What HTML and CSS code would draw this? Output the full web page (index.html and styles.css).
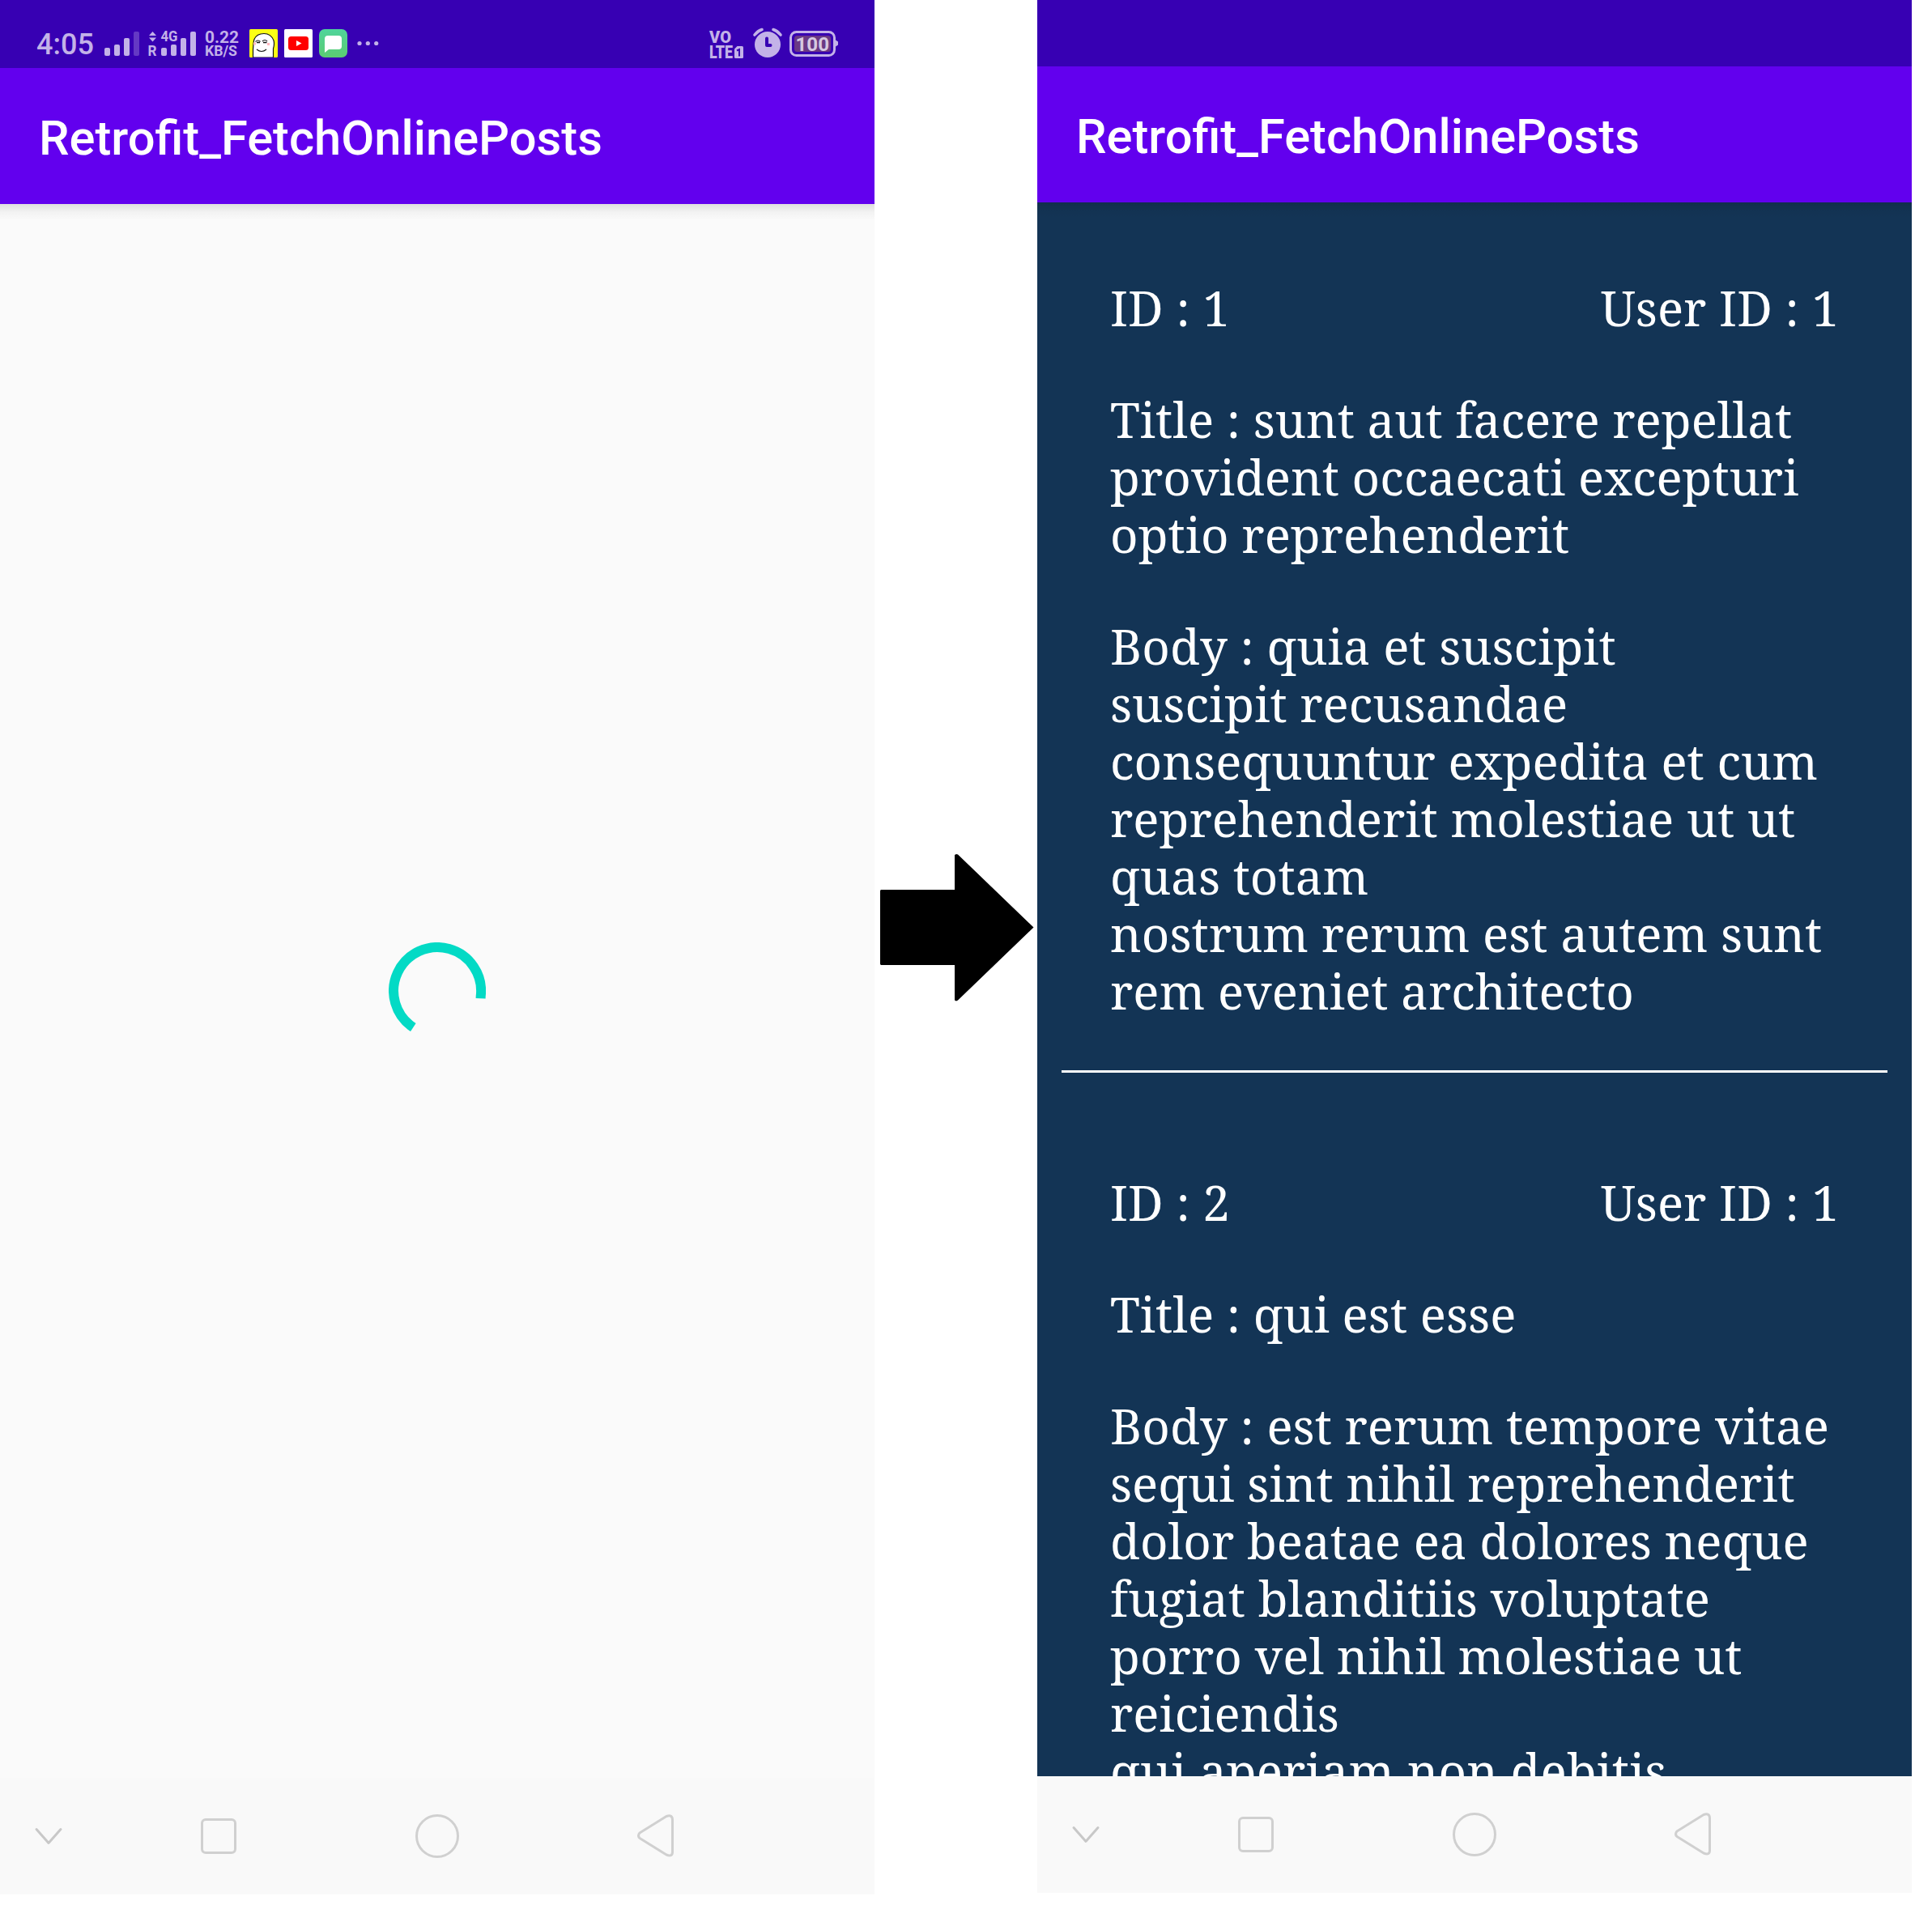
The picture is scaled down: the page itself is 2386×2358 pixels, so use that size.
FILE: index.html
```html
<!DOCTYPE html>
<html lang="en">
<head>
<meta charset="utf-8">
<title>Retrofit_FetchOnlinePosts</title>
<link rel="stylesheet" href="styles.css">
</head>
<body>
<main class="board">
  <section class="phone">
    <header class="status">
      <span class="clock">4:05</span>
      <svg class="sig" width="44" height="84" viewBox="129 0 44 84">
        <rect x="129" y="59" width="7" height="10" rx="2"/><rect x="141" y="55" width="7" height="14" rx="2"/><rect x="153" y="47" width="7" height="22" rx="2"/><rect x="165" y="39" width="7" height="30" rx="2" opacity=".32"/>
      </svg>
      <svg class="sig2" width="60" height="84" viewBox="183 0 60 84">
        <path d="M184 44l4.500-5 4.500 5zM184 46.500l4.500 5 4.500-5z"/>
        <text class="tiny" x="182.500" y="69" textLength="11" lengthAdjust="spacingAndGlyphs">R</text>
        <text class="tiny" x="198.500" y="51" textLength="21" lengthAdjust="spacingAndGlyphs">4G</text>
        <rect x="199" y="59" width="7" height="10" rx="2"/><rect x="211" y="55" width="7" height="14" rx="2"/><rect x="223" y="47" width="7" height="22" rx="2"/><rect x="235" y="39" width="7" height="30" rx="2"/>
      </svg>
      <svg class="net" width="44" height="84" viewBox="252 0 44 84">
        <text class="rate" x="253" y="53" textLength="42" lengthAdjust="spacingAndGlyphs">0.22</text>
        <text class="unit" x="253" y="69" textLength="40" lengthAdjust="spacingAndGlyphs">KB/S</text>
      </svg>
      <svg class="app" width="35" height="35" viewBox="0 0 35 35">
        <rect width="35" height="35" rx="1.500" fill="#fbff14"/>
        <path d="M4.500 35V25C5 19 5 15 6 12.500 8 8 12 5.500 18 5.500S28 9 30 14c1 4 .5 7-.5 10V35z" fill="#fff" stroke="#111" stroke-width="1.200"/>
        <path d="M7.500 15.500q3-3 6 0M16 15q3-3 6 0M9 25q6 5 12 0" fill="none" stroke="#111" stroke-width="1.100"/>
        <path d="M9 16.500h4M17 16.500h4.500" stroke="#111" stroke-width="1.400"/>
        <path d="M5 18h3M22 18.500h3" stroke="#ffb5bd" stroke-width="3"/>
      </svg>
      <svg class="app" width="35" height="35" viewBox="0 0 35 35">
        <rect width="35" height="35" rx="1.500" fill="#fff"/><rect x="5" y="9" width="25" height="17" rx="3.500" fill="#f00"/><path d="M15 14l6.500 3.500L15 21z" fill="#fff"/>
      </svg>
      <svg class="app" width="35" height="35" viewBox="0 0 35 35">
        <defs><linearGradient id="g" x2="0" y2="1"><stop stop-color="#50d49b"/><stop offset="1" stop-color="#5bcc72"/></linearGradient></defs>
        <rect width="35" height="35" rx="7" fill="url(#g)"/><path d="M7 12q0-4 4-4h13q4 0 4 4v9q0 4-4 4H12l-5 4z" fill="#fff"/>
      </svg>
      <svg class="dots" width="28" height="84" viewBox="441 0 28 84"><circle cx="444" cy="53.500" r="2.600"/><circle cx="454.300" cy="53.500" r="2.600"/><circle cx="464.700" cy="53.500" r="2.600"/></svg>
      <svg class="right" width="162" height="84" viewBox="875 0 162 84">
        <text class="volte" x="876" y="53" font-size="21" textLength="27" lengthAdjust="spacingAndGlyphs">VO</text>
        <text class="volte" x="876" y="72" font-size="22" textLength="29" lengthAdjust="spacingAndGlyphs">LTE</text>
        <path d="M910.500 57h6q1.500 0 1.500 1.500V70.500q0 1.500-1.500 1.500H908.500q-1.500 0-1.500-1.500V60.500z"/>
        <path d="M910 62.500l3-1.500V69.500" fill="none" stroke="#3700b3" stroke-width="2"/>
        <circle cx="948" cy="55" r="16"/>
        <path d="M932 43q4-5 9-6.500M964 43q-4-5-9-6.500" fill="none" stroke="#c3b2e8" stroke-width="3.600" stroke-linecap="round"/>
        <path d="M947 47.500V56h4.500" fill="none" stroke="#3700b3" stroke-width="4" stroke-linecap="round" stroke-linejoin="round"/>
        <rect x="976.500" y="39.500" width="54" height="29" rx="7" fill="none" stroke="#c3b2e8" stroke-width="3"/>
        <path d="M1032 49.500l3 2v4l-3 2z"/>
        <rect x="981" y="44" width="45" height="20" rx="3.500" fill="#6a3884"/>
        <text class="batt" x="982.500" y="63" textLength="41.500" lengthAdjust="spacingAndGlyphs">100</text>
      </svg>
    </header>
    <div class="bar"><h1>Retrofit_FetchOnlinePosts</h1></div>
    <div class="content loading">
      <svg width="120" height="120" viewBox="-60 -60 120 120"><path d="M-29.700 45.100A54 54 0 1 1 53.700 6.500L53.600 9.200" fill="none" stroke="#03dac5" stroke-width="12"/></svg>
    </div>
    <nav class="nav">
      <svg width="54" height="56" viewBox="-27 -28 54 56"><path d="M-15-8.500L0 8.500 15-8.500" stroke="#c8c8c8"/></svg>
      <svg width="54" height="56" viewBox="-27 -28 54 56"><rect x="-20.500" y="-20.500" width="41" height="41" rx="4.500"/></svg>
      <svg width="54" height="56" viewBox="-27 -28 54 56"><circle r="25.500"/></svg>
      <svg width="54" height="56" viewBox="-27 -28 54 56"><path d="M-20-4L13-24.500Q20.500-27 20.500-20V19.500Q20.500 26 13 23L-20 2.500Q-23-.5-20-4z"/></svg>
    </nav>
  </section>

  <div class="between">
    <svg width="190" height="182" viewBox="1087 1055 190 182"><path d="M1088 1099h91v-43l2-1 2 .5 93.500 90-93.500 90-2 1-2-1v-43.500h-91l-1-1v-91z"/></svg>
  </div>

  <section class="phone second">
    <header class="status"></header>
    <div class="bar"><h1>Retrofit_FetchOnlinePosts</h1></div>
    <div class="content posts">
      <article class="post">
        <div class="ids"><span>ID : 1</span><span>User ID : 1</span></div>
        <p>Title : sunt aut facere repellat provident occaecati excepturi optio reprehenderit</p>
        <p>Body : quia et suscipit<br>suscipit recusandae consequuntur expedita et cum<br>reprehenderit molestiae ut ut quas totam<br>nostrum rerum est autem sunt rem eveniet architecto</p>
      </article>
      <article class="post">
        <div class="ids"><span>ID : 2</span><span>User ID : 1</span></div>
        <p>Title : qui est esse</p>
        <p>Body : est rerum tempore vitae<br>sequi sint nihil reprehenderit dolor beatae ea dolores neque<br>fugiat blanditiis voluptate porro vel nihil molestiae ut reiciendis<br>qui aperiam non debitis</p>
      </article>
    </div>
    <nav class="nav">
      <svg width="54" height="56" viewBox="-27 -28 54 56"><path d="M-15-8.500L0 8.500 15-8.500" stroke="#c8c8c8"/></svg>
      <svg width="54" height="56" viewBox="-27 -28 54 56"><rect x="-20.500" y="-20.500" width="41" height="41" rx="4.500"/></svg>
      <svg width="54" height="56" viewBox="-27 -28 54 56"><circle r="25.500"/></svg>
      <svg width="54" height="56" viewBox="-27 -28 54 56"><path d="M-20-4L13-24.500Q20.500-27 20.500-20V19.500Q20.500 26 13 23L-20 2.500Q-23-.5-20-4z"/></svg>
    </nav>
  </section>
</main>
</body>
</html>
```
FILE: styles.css
```css
* { box-sizing: border-box; }
body { margin: 0; background: #fff; }
.board { display: flex; width: 2386px; height: 2358px; overflow: hidden; }
.phone { width: 1080px; height: 2340px; display: flex; flex-direction: column; flex: none; overflow: hidden; }
.status { height: 84px; flex: none; background: #3700b3; color: #c3b2e8; display: flex; align-items: flex-start; font-family: Roboto, sans-serif; }
.second { height: 2338px; }
.second .status { height: 82px; }
.status svg { flex: none; fill: #c3b2e8; }
.clock { width: 83px; padding-left: 45px; margin-right: 46px; font: 500 36px/42px Roboto, sans-serif; padding-top: 34px; white-space: nowrap; }
.sig2 { margin-left: 10px; }
.net { margin-left: 9px; }
.app { margin-top: 36px; margin-left: 8px; }
.net + .app { margin-left: 12px; }
.dots { margin-left: 12px; }
.right { margin-left: auto; margin-right: 43px; }
.tiny { font: 700 17.5px Roboto, sans-serif; }
.rate { font: 700 21px Roboto, sans-serif; }
.unit { font: 700 18px Roboto, sans-serif; }
.volte { font-family: Roboto, sans-serif; font-weight: 900; }
.batt { font: 700 24px Roboto, sans-serif; fill: #d6c8e0; }
.bar { height: 168px; flex: none; background: #6200ee; display: flex; align-items: center; padding-left: 48px; }
.bar h1 { margin: 0; padding-top: 5px; color: #fff; font: 500 59.65px/70px Roboto, sans-serif; }
.content { flex: 1; min-height: 0; overflow: hidden; background-color: #fafafa; background-image: linear-gradient(rgba(0,0,0,.11), rgba(0,0,0,.03) 10px, transparent 20px); background-repeat: no-repeat; }
.loading { display: flex; align-items: center; justify-content: center; }
.nav { height: 144px; flex: none; background: #f9f9f9; display: grid; grid-template-columns: 120px 300px 240px 300px; align-items: center; justify-items: center; }
.nav svg { fill: none; stroke: #d0d0d0; stroke-width: 3; stroke-linecap: round; stroke-linejoin: round; }
.between { width: 201px; flex: none; padding: 1055px 0 0 7px; }
.between svg { display: block; }
.posts { background-color: #133455; color: #fff; padding: 0 30px; font: 60px/71px "Noto Serif", "DejaVu Serif", serif; letter-spacing: .06px; }
.post { padding: 95px 60px 0; border-bottom: 3px solid #fff; height: 1075px; }
.post + .post { padding-top: 125px; }
.ids { display: flex; justify-content: space-between; }
.post p { margin: 67px 0 0; }
```
